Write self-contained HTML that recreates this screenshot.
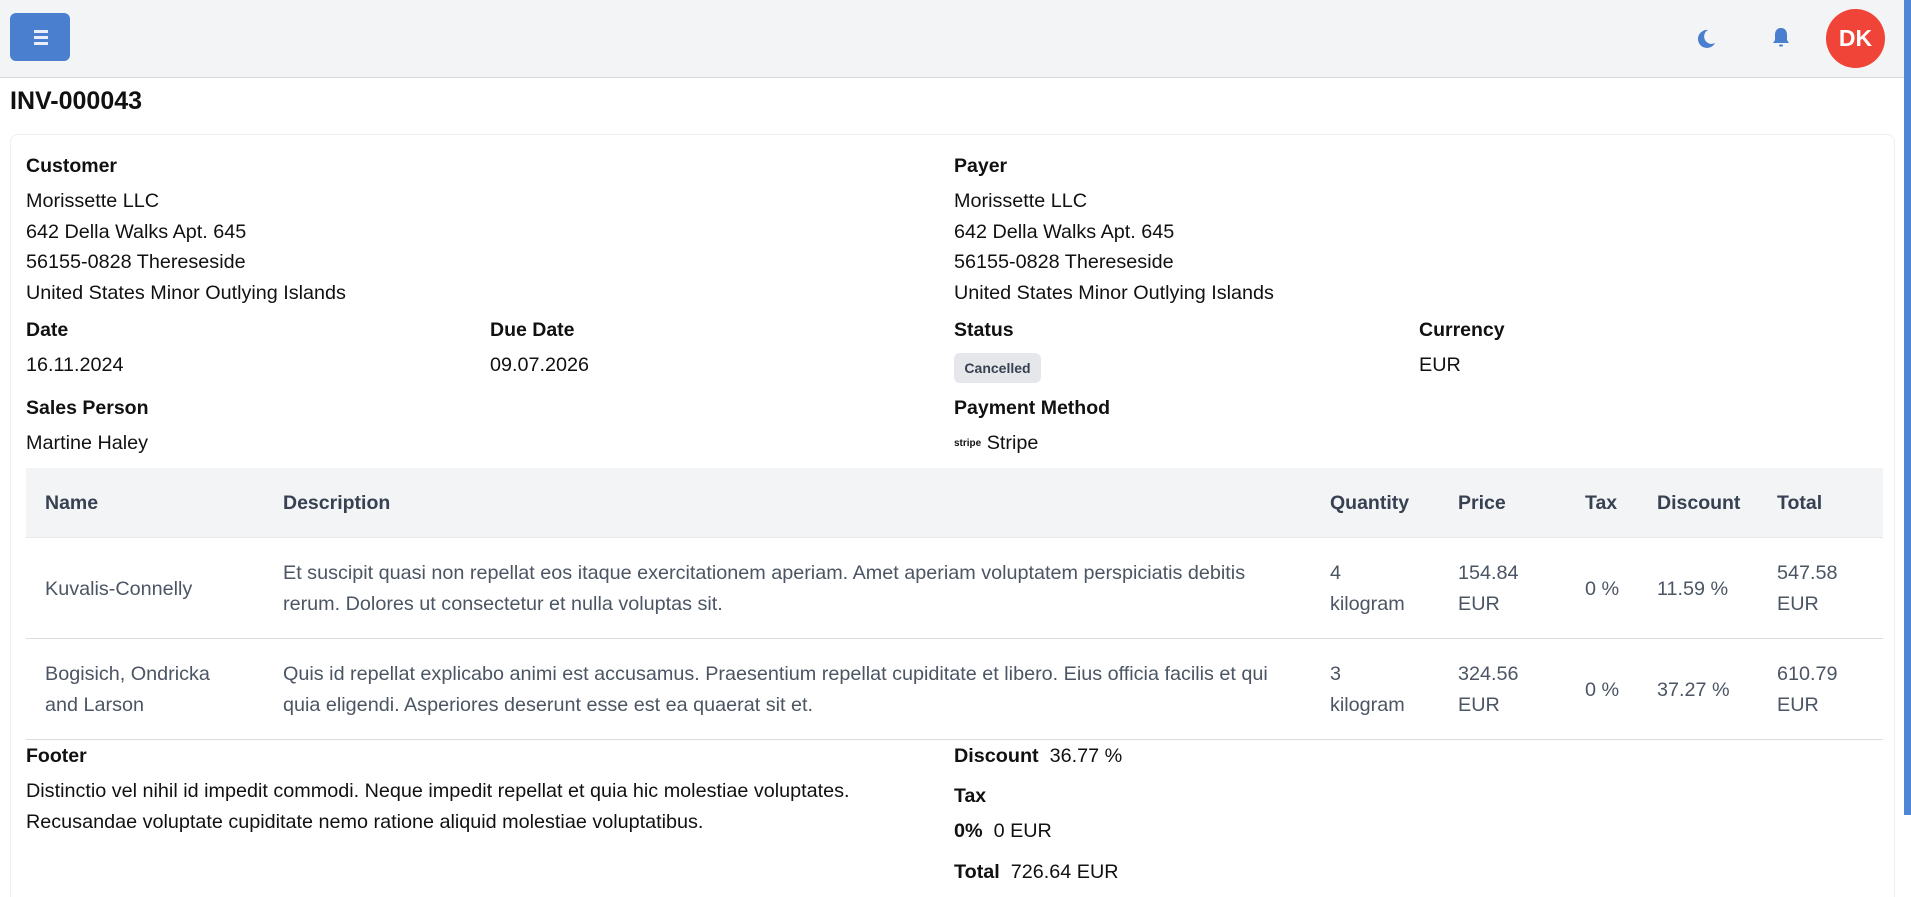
<!DOCTYPE html>
<html><head><meta charset="utf-8"><style>
*{box-sizing:border-box;margin:0;padding:0}
html{width:1911px;height:897px;overflow:hidden}
body{width:1911px;height:897px;overflow:hidden;background:#fff;font-family:"Liberation Sans",sans-serif;color:#111;font-size:19.8px;position:relative}
.hdr{position:absolute;left:0;top:0;width:1904px;height:78px;background:#f3f4f6;border-bottom:1px solid #d6d9de}
.btn{position:absolute;left:10px;top:13px;width:60px;height:48px;background:#4a7fd0;border-radius:6px}
.btn i{position:absolute;left:24px;width:14px;height:2.5px;background:#e8eefa}
.av{position:absolute;left:1826px;top:9px;width:59px;height:59px;border-radius:50%;background:#f04438;color:#fff;font-weight:bold;font-size:23px;text-align:center;line-height:59px}
.sb{position:absolute;right:0;top:0;width:7px;height:815px;background:#4f86d6}
h1{position:absolute;left:10px;top:87px;font-size:25px;font-weight:bold}
.card{position:absolute;left:10px;top:134px;width:1885px;height:780px;border:1px solid #eceef1;border-radius:8px}
.t{position:absolute;white-space:nowrap;line-height:30.5px}
b.t{font-weight:bold;font-size:19.5px}
.badge{position:absolute;left:954px;top:353px;width:87px;height:30px;background:#e5e7eb;border-radius:6px;font-size:14px;font-weight:bold;color:#374151;text-align:center;line-height:30px}
.th{position:absolute;left:26px;top:468px;width:1857px;height:70px;background:#f3f4f6;border-bottom:1px solid #e5e7eb}
.row{position:absolute;left:26px;width:1857px;border-bottom:1px solid #d9dce1}
.g{color:#4b5563}
.h{color:#374151;font-weight:bold;font-size:19.5px}
</style></head><body>
<div class="hdr">
<div class="btn"><i style="top:17px"></i><i style="top:23px"></i><i style="top:29px"></i></div>
<svg style="position:absolute;left:1696px;top:29px" width="20" height="20" viewBox="0 0 20 20"><path d="M12 1A9 9 0 1 0 19 14A7 7 0 0 1 12 1Z" fill="#4a7fd0"/></svg>
<svg style="position:absolute;left:1771px;top:27px" width="20" height="22" viewBox="0 0 20 22"><path d="M10 1C6 1 4 4 4 8V13L2 16H18L16 13V8C16 4 14 1 10 1Z" fill="#4a7fd0"/><rect x="8" y="17.5" width="4" height="2" rx="1" fill="#4a7fd0"/></svg>
<div class="av">DK</div>
</div>
<div class="sb"></div>
<h1>INV-000043</h1>
<div class="card"></div>
<b class="t" style="left:26px;top:151px">Customer</b>
<div class="t" style="left:26px;top:186px">Morissette LLC<br>642 Della Walks Apt. 645<br>56155-0828 Thereseside<br>United States Minor Outlying Islands</div>
<b class="t" style="left:954px;top:151px">Payer</b>
<div class="t" style="left:954px;top:186px">Morissette LLC<br>642 Della Walks Apt. 645<br>56155-0828 Thereseside<br>United States Minor Outlying Islands</div>
<b class="t" style="left:26px;top:315px">Date</b><div class="t" style="left:26px;top:350px">16.11.2024</div>
<b class="t" style="left:490px;top:315px">Due Date</b><div class="t" style="left:490px;top:350px">09.07.2026</div>
<b class="t" style="left:954px;top:315px">Status</b><div class="badge">Cancelled</div>
<b class="t" style="left:1419px;top:315px">Currency</b><div class="t" style="left:1419px;top:350px">EUR</div>
<b class="t" style="left:26px;top:393px">Sales Person</b><div class="t" style="left:26px;top:428px">Martine Haley</div>
<b class="t" style="left:954px;top:393px">Payment Method</b><div class="t" style="left:954px;top:428px"><span style="font-size:10px;font-weight:bold;vertical-align:3px">stripe</span> Stripe</div>
<div class="th"></div>
<div class="t h" style="left:45px;top:488px">Name</div>
<div class="t h" style="left:283px;top:488px">Description</div>
<div class="t h" style="left:1330px;top:488px">Quantity</div>
<div class="t h" style="left:1458px;top:488px">Price</div>
<div class="t h" style="left:1585px;top:488px">Tax</div>
<div class="t h" style="left:1657px;top:488px">Discount</div>
<div class="t h" style="left:1777px;top:488px">Total</div>
<div class="row" style="top:538px;height:101px"></div>
<div class="row" style="top:639px;height:101px"></div>
<div class="t g" style="left:45px;top:574px">Kuvalis-Connelly</div>
<div class="t g" style="left:283px;top:558px">Et suscipit quasi non repellat eos itaque exercitationem aperiam. Amet aperiam voluptatem perspiciatis debitis<br>rerum. Dolores ut consectetur et nulla voluptas sit.</div>
<div class="t g" style="left:1330px;top:558px">4<br>kilogram</div>
<div class="t g" style="left:1458px;top:558px">154.84<br>EUR</div>
<div class="t g" style="left:1585px;top:574px">0 %</div>
<div class="t g" style="left:1657px;top:574px">11.59 %</div>
<div class="t g" style="left:1777px;top:558px">547.58<br>EUR</div>
<div class="t g" style="left:45px;top:659px">Bogisich, Ondricka<br>and Larson</div>
<div class="t g" style="left:283px;top:659px">Quis id repellat explicabo animi est accusamus. Praesentium repellat cupiditate et libero. Eius officia facilis et qui<br>quia eligendi. Asperiores deserunt esse est ea quaerat sit et.</div>
<div class="t g" style="left:1330px;top:659px">3<br>kilogram</div>
<div class="t g" style="left:1458px;top:659px">324.56<br>EUR</div>
<div class="t g" style="left:1585px;top:675px">0 %</div>
<div class="t g" style="left:1657px;top:675px">37.27 %</div>
<div class="t g" style="left:1777px;top:659px">610.79<br>EUR</div>
<b class="t" style="left:26px;top:741px">Footer</b>
<div class="t" style="left:26px;top:776px">Distinctio vel nihil id impedit commodi. Neque impedit repellat et quia hic molestiae voluptates.<br>Recusandae voluptate cupiditate nemo ratione aliquid molestiae voluptatibus.</div>
<div class="t" style="left:954px;top:741px"><b>Discount</b>&nbsp; 36.77 %</div>
<b class="t" style="left:954px;top:781px">Tax</b>
<div class="t" style="left:954px;top:816px"><b>0%</b>&nbsp; 0 EUR</div>
<div class="t" style="left:954px;top:857px"><b>Total</b>&nbsp; 726.64 EUR</div>
</body></html>
